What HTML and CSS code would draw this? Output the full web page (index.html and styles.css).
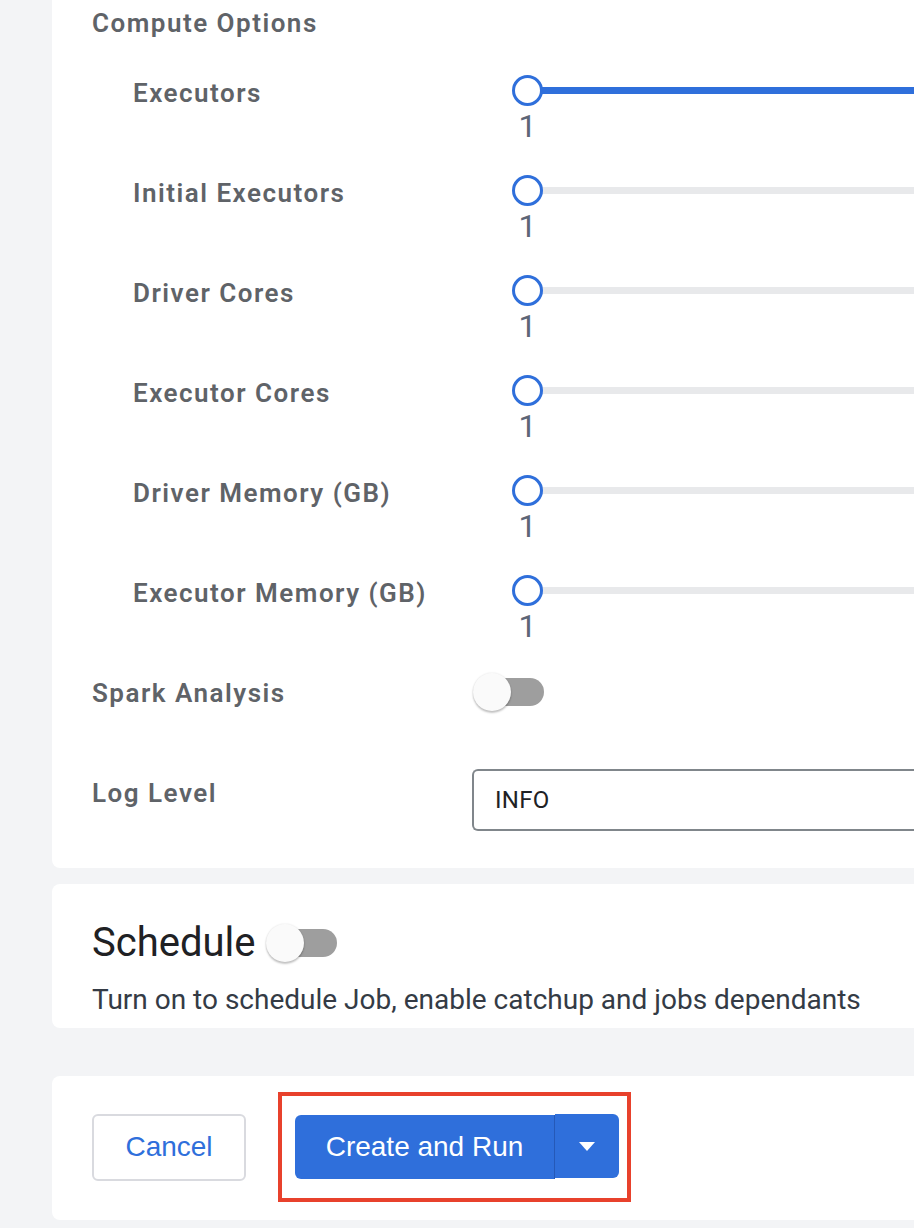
FILE: index.html
```html
<!DOCTYPE html>
<html lang="en">
<head>
<meta charset="utf-8">
<title>Create Job</title>
<link rel="stylesheet" href="styles.css">
</head>
<body>
<div class="page">
  <section class="card card-compute">
    <div class="form">
      <div class="section-title">Compute Options</div>
      <div class="row row-slider">
        <div class="label">Executors</div>
        <div class="slider">
          <div class="track"><div class="fill" style="width:100%"></div><div class="thumb"></div></div>
          <div class="value">1</div>
        </div>
      </div>
      <div class="row row-slider">
        <div class="label">Initial Executors</div>
        <div class="slider">
          <div class="track"><div class="fill" style="width:0%"></div><div class="thumb"></div></div>
          <div class="value">1</div>
        </div>
      </div>
      <div class="row row-slider">
        <div class="label">Driver Cores</div>
        <div class="slider">
          <div class="track"><div class="fill" style="width:0%"></div><div class="thumb"></div></div>
          <div class="value">1</div>
        </div>
      </div>
      <div class="row row-slider">
        <div class="label">Executor Cores</div>
        <div class="slider">
          <div class="track"><div class="fill" style="width:0%"></div><div class="thumb"></div></div>
          <div class="value">1</div>
        </div>
      </div>
      <div class="row row-slider">
        <div class="label">Driver Memory (GB)</div>
        <div class="slider">
          <div class="track"><div class="fill" style="width:0%"></div><div class="thumb"></div></div>
          <div class="value">1</div>
        </div>
      </div>
      <div class="row row-slider">
        <div class="label">Executor Memory (GB)</div>
        <div class="slider">
          <div class="track"><div class="fill" style="width:0%"></div><div class="thumb"></div></div>
          <div class="value">1</div>
        </div>
      </div>
      <div class="row row-toggle">
        <div class="label">Spark Analysis</div>
        <div class="switch"><span class="switch-track"></span><span class="switch-thumb"></span></div>
      </div>
      <div class="row row-select">
        <div class="label">Log Level</div>
        <div class="select">INFO</div>
      </div>
    </div>
  </section>

  <section class="card card-schedule">
    <div class="schedule-head">
      <h2 class="schedule-title">Schedule</h2>
      <div class="switch"><span class="switch-track"></span><span class="switch-thumb"></span></div>
    </div>
    <p class="schedule-desc">Turn on to schedule Job, enable catchup and jobs dependants</p>
  </section>

  <section class="card card-actions">
    <button class="btn-cancel" type="button">Cancel</button>
    <div class="highlight">
      <div class="split-btn">
        <button class="btn-primary" type="button">Create and Run</button>
        <button class="btn-caret" type="button" aria-label="More options">
          <svg width="16" height="9" viewBox="0 0 16 9"><path d="M0 0 L16 0 L8 9 Z" fill="#ffffff"/></svg>
        </button>
      </div>
    </div>
  </section>
</div>
</body>
</html>
```
FILE: styles.css
```css
html, body {
  margin: 0;
  padding: 0;
  overflow: hidden;
  background: #f3f4f6;
}

body {
  font-family: Roboto, "Noto Sans", "Liberation Sans", sans-serif;
  width: 914px;
  height: 1228px;
}

.page {
  padding-left: 52px;
  width: 862px;
}

.card {
  background: #ffffff;
  border-radius: 8px 0 0 8px;
  padding-left: 40px;
}

.card-compute {
  border-radius: 0 0 0 8px;
  padding-top: 5px;
  padding-bottom: 37px;
}

.form {
  display: flex;
  flex-direction: column;
  gap: 33px;
}

.section-title {
  font-size: 26px;
  line-height: 36px;
  font-weight: 600;
  letter-spacing: 1.5px;
  color: #5f6368;
  margin-bottom: 1px;
}

.row {
  display: flex;
  align-items: flex-start;
}

.label {
  box-sizing: border-box;
  width: 380px;
  flex: none;
  font-size: 26px;
  line-height: 36px;
  font-weight: 600;
  letter-spacing: 1.5px;
  color: #5f6368;
}

.row-slider .label {
  padding-left: 41px;
  width: 420px;
}

.slider {
  flex: 1;
  display: flex;
  flex-direction: column;
  min-width: 0;
}

.track {
  position: relative;
  height: 31px;
}

.track::before {
  content: "";
  position: absolute;
  left: 15px;
  right: 0;
  top: 12px;
  height: 7px;
  background: #e8e9eb;
}

.fill {
  position: absolute;
  left: 15px;
  top: 12px;
  height: 7px;
  background: #2f6fdb;
  max-width: calc(100% - 15px);
}

.thumb {
  position: absolute;
  left: 0;
  top: 0;
  width: 31px;
  height: 31px;
  box-sizing: border-box;
  border: 3.5px solid #2f6fdb;
  border-radius: 50%;
  background: #ffffff;
}

.value {
  width: 31px;
  text-align: center;
  margin-top: 4px;
  font-size: 32px;
  line-height: 32px;
  color: #5d6677;
}

.row-toggle {
  height: 61px;
}

.switch {
  position: relative;
  width: 74px;
  height: 40px;
  flex: none;
}

.row-toggle .switch {
  margin-top: -3px;
}

.switch-track {
  position: absolute;
  left: 6px;
  top: 6px;
  width: 66px;
  height: 28px;
  border-radius: 14px;
  background: #9e9e9e;
}

.switch-thumb {
  position: absolute;
  left: 1px;
  top: 1px;
  width: 38px;
  height: 38px;
  border-radius: 50%;
  background: #fafafa;
  box-shadow: 0 2px 2px rgba(0, 0, 0, 0.22), 0 0 2px rgba(0, 0, 0, 0.12);
}

.row-select .label {
  margin-top: 6px;
}

.select {
  flex: 1;
  height: 62px;
  box-sizing: border-box;
  border: 2px solid #80868b;
  border-right: none;
  border-radius: 6px 0 0 6px;
  padding-left: 21px;
  font-size: 24px;
  line-height: 58px;
  color: #202124;
  letter-spacing: 0.3px;
}

.card-schedule {
  margin-top: 16px;
  padding-top: 35px;
  padding-bottom: 10px;
}

.schedule-head {
  display: flex;
  align-items: center;
  gap: 10px;
}

.schedule-title {
  margin: 0;
  font-size: 40px;
  line-height: 48px;
  font-weight: 400;
  color: #202124;
}

.schedule-desc {
  margin: 15px 0 0;
  font-size: 28px;
  line-height: 36px;
  color: #343b45;
  white-space: nowrap;
}

.card-actions {
  margin-top: 48px;
  padding-top: 16px;
  padding-bottom: 18px;
  display: flex;
  align-items: center;
  gap: 32px;
}

.btn-cancel {
  width: 154px;
  height: 67px;
  box-sizing: border-box;
  background: #ffffff;
  border: 2px solid #d9dadf;
  border-radius: 6px;
  font-family: "Liberation Sans", Arial, sans-serif;
  font-size: 28px;
  color: #2f6fdb;
  padding: 0;
}

.highlight {
  border: 4px solid #e8412c;
  padding: 18px 8px 19px 13px;
}

.split-btn {
  display: flex;
  align-items: flex-start;
}

.btn-primary {
  width: 260px;
  height: 64px;
  margin-top: 1px;
  background: #2f6fdb;
  border: none;
  border-right: 1px solid #2559b8;
  border-radius: 6px 0 0 6px;
  font-family: "Liberation Sans", Arial, sans-serif;
  font-size: 28px;
  color: #ffffff;
  padding: 0;
}

.btn-caret {
  width: 64px;
  height: 64px;
  background: #2f6fdb;
  border: none;
  border-radius: 0 6px 6px 0;
  padding: 0;
  display: flex;
  align-items: center;
  justify-content: center;
}

.btn-caret svg {
  display: block;
  margin-top: 1px;
}
```
